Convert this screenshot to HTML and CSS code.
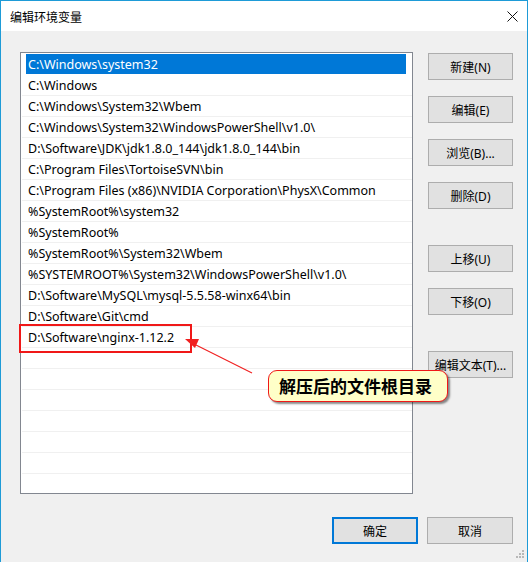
FILE: index.html
```html
<!DOCTYPE html>
<html lang="zh-CN">
<head>
  <meta charset="UTF-8">
  <meta name="viewport" content="width=device-width, initial-scale=1.0">
  <title>编辑环境变量</title>
  <link rel="stylesheet" href="styles.css">
</head>
<body>

  <div class="window">
    <!-- Title bar -->
    <div class="titlebar">
      <span class="title">编辑环境变量</span>
      <svg class="close" width="11" height="11" viewBox="0 0 11 11">
        <path d="M0.5 0.5 L10.5 10.5 M10.5 0.5 L0.5 10.5" stroke="#111" stroke-width="1" fill="none"/>
      </svg>
    </div>

    <div class="body">
      <div class="main">
        <!-- Path list -->
        <ul class="path-list">
          <li class="selected"><span>C:\Windows\system32</span></li>
          <li><span>C:\Windows</span></li>
          <li><span>C:\Windows\System32\Wbem</span></li>
          <li><span>C:\Windows\System32\WindowsPowerShell\v1.0\</span></li>
          <li><span>D:\Software\JDK\jdk1.8.0_144\jdk1.8.0_144\bin</span></li>
          <li><span>C:\Program Files\TortoiseSVN\bin</span></li>
          <li><span>C:\Program Files (x86)\NVIDIA Corporation\PhysX\Common</span></li>
          <li><span>%SystemRoot%\system32</span></li>
          <li><span>%SystemRoot%</span></li>
          <li><span>%SystemRoot%\System32\Wbem</span></li>
          <li><span>%SYSTEMROOT%\System32\WindowsPowerShell\v1.0\</span></li>
          <li><span>D:\Software\MySQL\mysql-5.5.58-winx64\bin</span></li>
          <li><span>D:\Software\Git\cmd</span></li>
          <li><span>D:\Software\nginx-1.12.2</span></li>
          <li></li>
          <li></li>
          <li></li>
          <li></li>
          <li></li>
          <li></li>
          <li></li>
        </ul>

        <!-- Side buttons -->
        <div class="side">
          <div class="group">
            <button>新建(N)</button>
            <button>编辑(E)</button>
            <button>浏览(B)...</button>
            <button>删除(D)</button>
          </div>
          <div class="group">
            <button>上移(U)</button>
            <button>下移(O)</button>
          </div>
          <div class="group">
            <button>编辑文本(T)...</button>
          </div>
        </div>
      </div>

      <div class="footer">
        <button class="default">确定</button>
        <button>取消</button>
      </div>
    </div>

    <!-- Annotation -->
    <div class="mark-box"></div>
    <svg class="arrow" width="528" height="562" viewBox="0 0 528 562">
      <line x1="252" y1="373" x2="194" y2="344" stroke="#f02020" stroke-width="1.2"/>
      <polygon points="185,339 199,339 195,348" fill="#f02020"/>
    </svg>
    <div class="callout">解压后的文件根目录</div>

    <svg class="grip" width="10" height="10" viewBox="0 0 10 10">
      <rect x="7" y="1" width="2" height="2" fill="#b8b8b8"/>
      <rect x="4" y="4" width="2" height="2" fill="#b8b8b8"/>
      <rect x="7" y="4" width="2" height="2" fill="#b8b8b8"/>
      <rect x="1" y="7" width="2" height="2" fill="#b8b8b8"/>
      <rect x="4" y="7" width="2" height="2" fill="#b8b8b8"/>
      <rect x="7" y="7" width="2" height="2" fill="#b8b8b8"/>
    </svg>
  </div>

</body>
</html>
```

FILE: styles.css
```css
body {
  margin: 0;
  font-family: "Noto Sans", "Noto Sans CJK SC", sans-serif;
  font-size: 12px;
  color: #000;
  background-color: #ffffff;
}

.window {
  position: relative;
  width: 526px;
  height: 561px;
  border: 1px solid #1e9bd7;
  border-bottom: none;
  background-color: #f0f0f0;
  overflow: hidden;
}

.titlebar {
  height: 30px;
  background-color: #ffffff;
  display: flex;
  align-items: center;
  justify-content: space-between;
  padding: 0 9px 0 9px;
}

.title {
  font-family: "Noto Sans CJK SC", sans-serif;
  font-size: 12px;
}

.close {
  display: block;
}

.body {
  padding: 21px 14px 0 19px;
}

.main {
  display: flex;
  gap: 15px;
}

.path-list {
  list-style: none;
  margin: 0;
  padding: 1px 0 0 1px;
  width: 390px;
  height: 439px;
  border: 1px solid #828790;
  background-color: #ffffff;
  overflow: hidden;
}

.path-list li {
  height: 20px;
  border-bottom: 1px solid #f0f0f0;
  padding-left: 4px;
  line-height: 21px;
  font-size: 12.5px;
  white-space: nowrap;
}

.path-list li span {
  display: block;
  height: 20px;
  padding-left: 2px;
}

.path-list li.selected {
  border-bottom-color: #ffffff;
}

.path-list li.selected span {
  background-color: #0078d7;
  color: #ffffff;
  width: 378px;
}

.side {
  display: flex;
  flex-direction: column;
  gap: 36px;
  margin-top: 1px;
}

.group {
  display: flex;
  flex-direction: column;
  gap: 16px;
}

button {
  width: 85px;
  height: 27px;
  padding: 0;
  font-family: "Noto Sans", "Noto Sans CJK SC", sans-serif;
  font-size: 12px;
  color: #000;
  background-color: #e1e1e1;
  border: 1px solid #adadad;
}

.footer {
  display: flex;
  justify-content: flex-end;
  gap: 9px;
  margin-top: 23px;
  padding-right: 0;
}

.footer button {
  width: 86px;
}

.footer .default {
  border: 2px solid #0078d7;
}

.mark-box {
  position: absolute;
  left: 18px;
  top: 323px;
  width: 169px;
  height: 25px;
  border: 2px solid #f01818;
}

.arrow {
  position: absolute;
  left: -1px;
  top: -1px;
}

.callout {
  position: absolute;
  left: 267px;
  top: 369px;
  width: 168px;
  height: 30px;
  padding-left: 10px;
  line-height: 30px;
  font-family: "Noto Sans CJK SC", sans-serif;
  font-size: 17px;
  font-weight: bold;
  background-color: #ffffc8;
  border: 1.5px solid #f01818;
  border-radius: 9px;
  box-shadow: 2px 2px 2px rgba(0, 0, 0, 0.45);
}

.grip {
  position: absolute;
  right: 2px;
  bottom: 3px;
}
```
